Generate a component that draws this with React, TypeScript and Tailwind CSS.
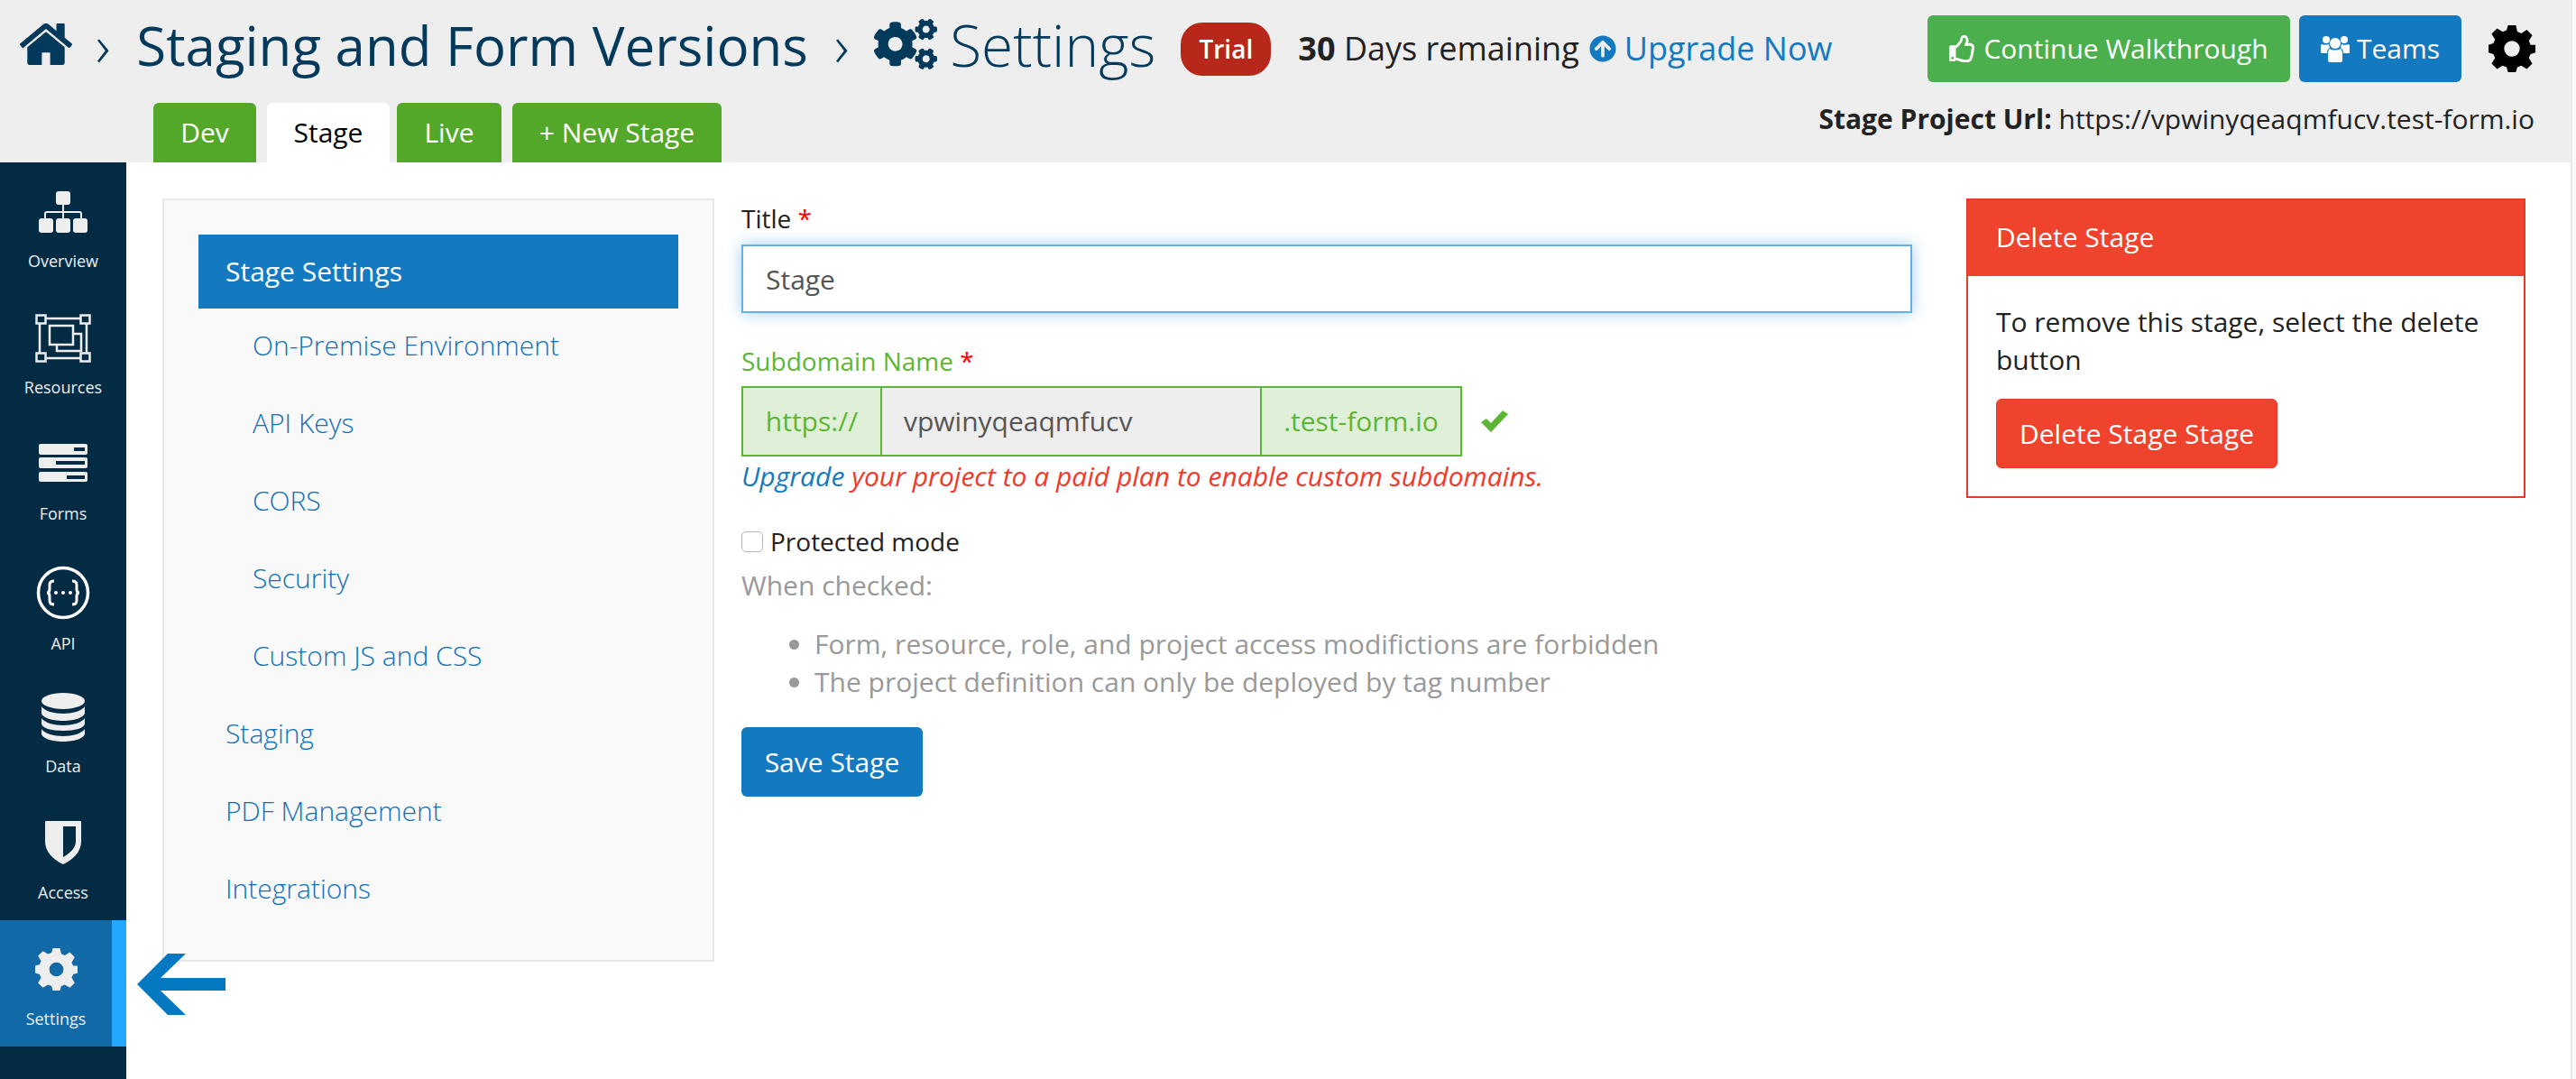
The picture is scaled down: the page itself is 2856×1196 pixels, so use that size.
import type { ReactNode } from 'react'
import { FaArrowCircleUp, FaCogs, FaRegThumbsUp } from 'react-icons/fa'

function HomeIcon() {
  return (
    <svg width="60" height="46" viewBox="0 256 1664 1280" fill="#033a5b">
      <path d="M1408 992v480q0 26-19 45t-45 19h-384v-384H704v384H320q-26 0-45-19t-19-45V992q0-1 .5-3t.5-3l575-474 575 474q1 2 1 6zm223-69l-62 74q-8 9-21 11h-3q-13 0-21-7L832 424 140 1001q-12 8-24 7-13-2-21-11l-62-74q-8-10-7-23.500t11-21.500l719-599q32-26 76-26t76 26l244 204V288q0-14 9-23t23-9h192q14 0 23 9t9 23v408l219 182q10 8 11 21.500t-7 23.500z" />
    </svg>
  )
}

function TeamIcon() {
  return (
    <svg width="32" height="30" viewBox="0 0 32 30" fill="#ffffff">
      <circle cx="6" cy="5" r="4" />
      <circle cx="26" cy="5" r="4" />
      <path d="M1 10c2 1 6 1 8 0l1 4c-2 1-3 3-3 6H1c-1 0-1-1-1-2v-5c0-1 0-2 1-3zM31 10c-2 1-6 1-8 0l-1 4c2 1 3 3 3 6h6c1 0 1-1 1-2v-5c0-1 0-2-1-3z" />
      <circle cx="16" cy="9" r="6" />
      <path d="M10 15c3 2 9 2 12 0 1 1 2 3 2 5v8c0 1-1 2-2 2H10c-1 0-2-1-2-2v-8c0-2 1-4 2-5z" />
    </svg>
  )
}

function CheckMark() {
  return (
    <svg width="30" height="24" viewBox="0 0 30 24" fill="#5cb634">
      <path d="M0 13l6-4 5 5L24 0l6 4-19 20z" />
    </svg>
  )
}

function OverviewIcon() {
  return (
    <svg width="54" height="46" viewBox="0 0 54 46" fill="#eeeeee">
      <rect x="19" y="0" width="16" height="15" rx="3" />
      <rect x="0" y="30" width="16" height="16" rx="3" />
      <rect x="19" y="30" width="16" height="16" rx="3" />
      <rect x="38" y="30" width="16" height="16" rx="3" />
      <path d="M26 15h2v7h17a3 3 0 0 1 3 3v5h-2v-5a1 1 0 0 0-1-1H28v6h-2v-6H9a1 1 0 0 0-1 1v5H6v-5a3 3 0 0 1 3-3h17z" />
    </svg>
  )
}

function ResourcesIcon() {
  return (
    <svg width="62" height="54" viewBox="0 0 62 54" fill="none" stroke="#eeeeee" strokeWidth="2.5">
      <rect x="5" y="5" width="52" height="44" />
      <rect x="1.500" y="1.500" width="10" height="9" fill="#032b43" />
      <rect x="50.500" y="1.500" width="10" height="9" fill="#032b43" />
      <rect x="1.500" y="43.500" width="10" height="9" fill="#032b43" />
      <rect x="50.500" y="43.500" width="10" height="9" fill="#032b43" />
      <rect x="16" y="13" width="26" height="21" />
      <path d="M42 22h9v19H24v-7" />
    </svg>
  )
}

function FormsIcon() {
  return (
    <svg width="54" height="42" viewBox="0 0 54 42">
      <rect x="0" y="0" width="54" height="12" rx="2" fill="#eeeeee" />
      <rect x="0" y="15" width="54" height="12" rx="2" fill="#eeeeee" />
      <rect x="0" y="31" width="54" height="11" rx="2" fill="#eeeeee" />
      <rect x="39" y="4" width="12" height="4" fill="#032b43" />
      <rect x="19" y="19" width="32" height="4" fill="#032b43" />
      <rect x="31" y="35" width="20" height="4" fill="#032b43" />
    </svg>
  )
}

function ApiIcon() {
  return (
    <svg width="60" height="60" viewBox="0 0 60 60" fill="none" stroke="#ffffff">
      <circle cx="30" cy="30" r="27.500" strokeWidth="3.500" />
      <path d="M20 17c-4 0-5 2-5 4v5c0 3-1 4-3 4 2 0 3 1 3 4v5c0 2 1 4 5 4M40 17c4 0 5 2 5 4v5c0 3 1 4 3 4-2 0-3 1-3 4v5c0 2-1 4-5 4" strokeWidth="3" />
      <circle cx="22" cy="30" r="2" fill="#ffffff" stroke="none" />
      <circle cx="30" cy="30" r="2" fill="#ffffff" stroke="none" />
      <circle cx="38" cy="30" r="2" fill="#ffffff" stroke="none" />
    </svg>
  )
}

function DataIcon() {
  return (
    <svg width="48" height="54" viewBox="0 0 48 54" fill="#eeeeee">
      <ellipse cx="24" cy="9" rx="24" ry="9" />
      <path d="M0 15c3 5 14 8 24 8s21-3 24-8v7c0 5-11 9-24 9S0 27 0 22z" />
      <path d="M0 28c3 5 14 8 24 8s21-3 24-8v6c0 5-11 8-24 8S0 39 0 34z" />
      <path d="M0 40c3 5 14 8 24 8s21-3 24-8v5c0 5-11 9-24 9S0 50 0 45z" />
    </svg>
  )
}

function AccessIcon() {
  return (
    <svg width="40" height="48" viewBox="0 0 40 48">
      <path fillRule="evenodd" fill="#eeeeee" d="M1 0h38a1 1 0 0 1 1 1v22c0 11-9 20-20 25C9 43 0 34 0 23V1a1 1 0 0 1 1-1zM20 6v34c7-4 14-10 14-17V6z" />
    </svg>
  )
}

function SettingsGear({ size, color }: { size: number; color: string }) {
  return (
    <svg width={size} height={size} viewBox="0 0 48 48">
      <path
        fill={color}
        fillRule="evenodd"
        d="M20 0h8l1.500 6.500 4 1.700 5.700-3.500 5.600 5.600-3.500 5.700 1.700 4L48 20v8l-5 1.500-1.700 4 3.500 5.700-5.600 5.600-5.700-3.500-4 1.700L28 48h-8l-1.500-5-4-1.700-5.700 3.500-5.600-5.600 3.500-5.700-1.700-4L0 28v-8l5-1.500 1.700-4-3.500-5.700 5.600-5.600 5.700 3.500 4-1.700zM24 16a8 8 0 1 0 0 16 8 8 0 0 0 0-16z"
      />
    </svg>
  )
}

function NavItem({ label, icon, iconPad, labelGap = 'mt-[5px]' }: { label: string; icon: ReactNode; iconPad: string; labelGap?: string }) {
  return (
    <div className="h-[140px] flex flex-col items-center">
      <div className={`h-[92px] flex items-end ${iconPad}`}>{icon}</div>
      <span className={`text-[18px] leading-[24px] font-medium text-[#eeeeee] ${labelGap}`}>{label}</span>
    </div>
  )
}

const subLinks = ['On-Premise Environment', 'API Keys', 'CORS', 'Security', 'Custom JS and CSS']
const mainLinks = ['Staging', 'PDF Management', 'Integrations']

export default function App() {
  return (
    <div className="h-screen w-full flex overflow-hidden bg-white text-[30px] leading-[42px] text-[#222222] font-['Open_Sans','Liberation_Sans',sans-serif]">
      <div className="flex-1 min-w-0 flex flex-col">
        <header className="h-[180px] bg-[#eeeeee] shrink-0">
          <div className="h-[108px] flex items-center pl-[21px]">
            <span className="-mt-[10px]">
              <HomeIcon />
            </span>
            <span className="ml-[25px] text-[64px] leading-[70px] font-light text-[#033a5b] -mt-[8px]">›</span>
            <h1 className="ml-[29px] text-[60px] leading-[70px] text-[#033a5b] -mt-[8px]">Staging and Form Versions</h1>
            <span className="ml-[29px] text-[64px] leading-[70px] font-light text-[#033a5b] -mt-[8px]">›</span>
            <FaCogs className="ml-[28px] text-[#033a5b] w-[70px] h-[62px] -mt-[10px]" />
            <span className="ml-[14px] text-[64px] leading-[70px] font-light text-[#033a5b] -mt-[8px]">Settings</span>
            <span className="ml-[28px] w-[100px] h-[59px] rounded-[24px] bg-[#b8281a] text-white font-semibold text-[28px] flex items-center justify-center">Trial</span>
            <span className="ml-[30px] text-[36px]">
              <b className="font-bold">30</b> Days remaining
            </span>
            <FaArrowCircleUp className="ml-[11px] text-[#137ac1] w-[30px] h-[30px]" />
            <span className="ml-[9px] text-[36px] text-[#137ac1]">Upgrade Now</span>
            <button className="ml-auto w-[402px] h-[74px] rounded-[6px] bg-[#4aaf4c] text-white text-[30px] flex items-center justify-center gap-[8px]">
              <FaRegThumbsUp className="w-[30px] h-[30px]" />
              Continue Walkthrough
            </button>
            <button className="ml-[10px] w-[180px] h-[74px] rounded-[6px] bg-[#137ac1] text-white text-[30px] flex items-center justify-center gap-[8px]">
              <TeamIcon />
              Teams
            </button>
            <span className="ml-[30px] mr-[39px]">
              <SettingsGear size={52} color="#000000" />
            </span>
          </div>
          <div className="h-[66px] mt-[6px] flex items-start pl-[170px] pr-[40px]">
            <div className="w-[114px] h-[66px] rounded-t-[6px] bg-[#53a82a] text-white flex items-center justify-center">Dev</div>
            <div className="ml-[12px] w-[136px] h-[66px] rounded-t-[6px] bg-white text-black flex items-center justify-center">Stage</div>
            <div className="ml-[8px] w-[116px] h-[66px] rounded-t-[6px] bg-[#53a82a] text-white flex items-center justify-center">Live</div>
            <div className="ml-[12px] w-[232px] h-[66px] rounded-t-[6px] bg-[#53a82a] text-white flex items-center justify-center">+ New Stage</div>
            <div className="ml-auto -mt-[3px]">
              <b className="font-bold">Stage Project Url:</b> https://vpwinyqeaqmfucv.test-form.io
            </div>
          </div>
        </header>

        <main className="flex-1 flex min-h-0">
          <aside className="w-[140px] shrink-0 bg-[#032b43]">
            <NavItem label="Overview" icon={<OverviewIcon />} iconPad="pb-[14px]" />
            <NavItem label="Resources" icon={<ResourcesIcon />} iconPad="pb-[10px]" />
            <NavItem label="Forms" icon={<FormsIcon />} iconPad="pb-[18px]" />
            <NavItem label="API" icon={<ApiIcon />} iconPad="pb-[5px]" labelGap="mt-[9px]" />
            <NavItem label="Data" icon={<DataIcon />} iconPad="pb-[10px]" />
            <NavItem label="Access" icon={<AccessIcon />} iconPad="pb-[14px]" />
            <div className="relative h-[140px] bg-[#1269a8] border-r-[16px] border-[#23a7ff] flex flex-col items-center">
              <div className="h-[92px] flex items-end pb-[14px]">
                <SettingsGear size={47} color="#eeeeee" />
              </div>
              <span className="text-[18px] leading-[24px] font-medium text-[#eeeeee] mt-[5px]">Settings</span>
              <svg className="absolute left-[152px] top-[37px]" width="98" height="68" viewBox="0 0 98 68" fill="#0478c0">
                <path d="M34 0h20L26 27h72v14H26l28 27H34L0 34z" />
              </svg>
            </div>
          </aside>

          <div className="flex-1 flex items-start pt-[40px] pl-[40px]">
            <nav className="w-[612px] h-[846px] shrink-0 border-2 border-[#e8e8e8] bg-[#f9f9f9] pt-[38px] px-[38px] font-light text-[#0f70b7]">
              <div className="h-[82px] bg-[#137ac1] text-white font-normal pl-[30px] flex items-center">Stage Settings</div>
              {subLinks.map((link, i) => (
                <div key={link} className={`h-[86px] pl-[60px] flex items-center ${i === 0 ? '-mt-[2px]' : ''}`}>
                  {link}
                </div>
              ))}
              {mainLinks.map((link) => (
                <div key={link} className="h-[86px] pl-[30px] flex items-center">
                  {link}
                </div>
              ))}
            </nav>

            <form className="ml-[30px] w-[1298px] shrink-0 pt-[1px]">
              <label className="block text-[28px]">
                Title <span className="text-[#ff0000]">*</span>
              </label>
              <input
                readOnly
                value="Stage"
                className="mt-[8px] block w-full h-[76px] border-2 border-[#66afe9] px-[25px] text-[30px] text-[#555555] outline-none shadow-[0_0_16px_rgba(102,175,233,0.6)]"
              />
              <label className="block mt-[32px] text-[28px] text-[#5cb634]">
                Subdomain Name <span className="text-[#ff0000]">*</span>
              </label>
              <div className="mt-[7px] flex items-center">
                <div className="w-[799px] h-[78px] flex border-2 border-[#5cb634] text-[#5cb634]">
                  <div className="w-[154px] bg-[#e0f0d8] border-r-2 border-[#5cb634] flex items-center justify-center">https://</div>
                  <div className="flex-1 bg-[#eeeeee] pl-[24px] flex items-center text-[#555555]">vpwinyqeaqmfucv</div>
                  <div className="w-[222px] bg-[#e0f0d8] border-l-2 border-[#5cb634] flex items-center justify-center">.test-form.io</div>
                </div>
                <span className="ml-[21px]">
                  <CheckMark />
                </span>
              </div>
              <p className="mt-[1px] italic text-[#f2392b]">
                <span className="text-[#137ac1]">Upgrade</span> your project to a paid plan to enable custom subdomains.
              </p>
              <label className="mt-[30px] flex items-center text-[28px]">
                <span className="w-[24px] h-[23px] rounded-[5px] border border-[#b5b5b5] bg-white" />
                <span className="ml-[8px]">Protected mode</span>
              </label>
              <p className="mt-[7px] text-[#999999]">When checked:</p>
              <ul className="mt-[23px] pl-[81px] list-disc text-[#999999]">
                <li>Form, resource, role, and project access modifictions are forbidden</li>
                <li>The project definition can only be deployed by tag number</li>
              </ul>
              <button type="button" className="mt-[29px] w-[201px] h-[77px] rounded-[6px] bg-[#137ac1] text-white">
                Save Stage
              </button>
            </form>

            <section className="ml-[60px] w-[620px] h-[332px] shrink-0 border-2 border-[#e9392a]">
              <div className="h-[84px] bg-[#ef432e] text-white pl-[31px] pb-[2px] flex items-center">Delete Stage</div>
              <div className="px-[31px] pt-[30px]">
                <p>To remove this stage, select the delete button</p>
                <button type="button" className="mt-[22px] w-[312px] h-[77px] rounded-[6px] bg-[#ef432e] border border-[#e9392a] text-white">
                  Delete Stage Stage
                </button>
              </div>
            </section>
          </div>
        </main>
      </div>
      <div className="w-[6px] shrink-0 bg-[#fafafa] border-l-2 border-[#e8e8e8]" />
    </div>
  )
}
